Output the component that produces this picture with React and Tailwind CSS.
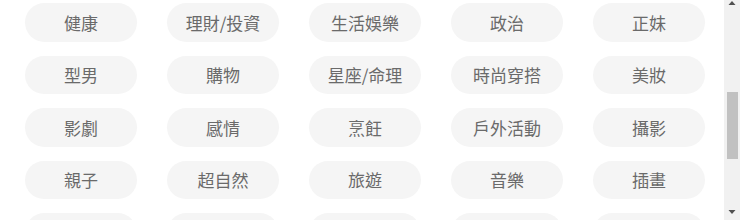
const tags = [
  '健康', '理財/投資', '生活娛樂', '政治', '正妹',
  '型男', '購物', '星座/命理', '時尚穿搭', '美妝',
  '影劇', '感情', '烹飪', '戶外活動', '攝影',
  '親子', '超自然', '旅遊', '音樂', '插畫',
  '', '', '', '', '',
]

export default function App() {
  return (
    <div
      className="flex h-[220px] w-[740px] overflow-hidden bg-white"
      style={{ fontFamily: '"Noto Sans CJK TC", "Noto Sans", sans-serif' }}
    >
      {/* ── Tag grid ── */}
      <div className="flex-1 pl-[25px] pt-[3px]">
        <div className="grid grid-cols-[repeat(5,112px)] gap-x-[30px] gap-y-[14px]">
          {tags.map((tag, i) => (
            <div
              key={i}
              className="flex h-[38.5px] items-center justify-center rounded-full bg-[#f5f5f5] text-[17px] text-[#6a6a6a]"
            >
              {tag}
            </div>
          ))}
        </div>
      </div>

      {/* ── Scrollbar ── */}
      <div className="flex w-[16px] flex-col items-center bg-[#f1f1f1]">
        <svg width="8" height="6" viewBox="0 0 8 6">
          <polygon points="4,1 7.5,5 0.5,5" fill="#505050" />
        </svg>
        <div className="mt-[86px] h-[67px] w-[11px] bg-[#c1c1c1]" />
        <div className="flex-1" />
        <svg width="8" height="6" viewBox="0 0 8 6" className="mb-[5px]">
          <polygon points="0.5,1 7.5,1 4,5" fill="#505050" />
        </svg>
      </div>
    </div>
  )
}
